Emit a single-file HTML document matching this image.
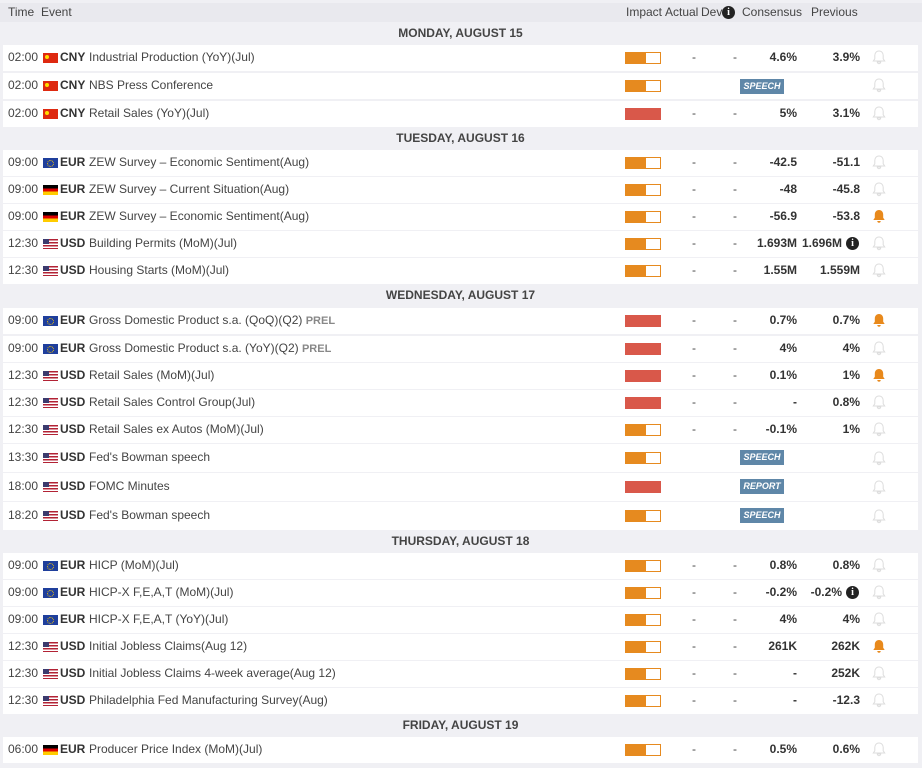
<!DOCTYPE html>
<html><head><meta charset="utf-8"><style>
body{margin:0;width:922px;height:768px;background:#f0f0f4;font-family:"Liberation Sans",Arial,sans-serif;font-size:12px;color:#444;position:relative;overflow:hidden}
.hd{position:absolute;left:0;top:3px;width:922px;height:19px;background:#e9e9ee;line-height:19px;font-size:12px;color:#444}
.hd span{position:absolute}
.dy{position:absolute;left:3px;width:915px;height:22px;line-height:22px;text-align:center;font-weight:bold;font-size:12px;color:#444}
.r{position:absolute;left:3px;width:915px;height:26px;background:#fff;line-height:25px}
.r>*{position:absolute}
.t{left:5px}
.f{left:40px;top:8px;width:15px;height:10px}
.cn{background:#de2910}
.cn:after{content:"";position:absolute;left:2px;top:2px;width:4px;height:4px;background:#ffde00;border-radius:50%}
.eu{background:#1f3f9c}
.eu:after{content:"";position:absolute;left:4px;top:2px;width:5px;height:5px;border:1px dotted #fc0;border-radius:50%}
.de{background:linear-gradient(#000 0 33%,#d00 33% 66%,#fc0 66%)}
.us{background:repeating-linear-gradient(#b22234 0 1.5px,#fff 1.5px 3px)}
.us:after{content:"";position:absolute;left:0;top:0;width:6px;height:5px;background:#3c3b6e}
.c{left:57px;font-weight:bold;color:#333}
.e{left:86px;color:#444}
.pr{color:#888;font-weight:bold;font-size:11px}
.im{left:622px;top:7px;width:34px;height:10px;border:1px solid #e68a1f;background:linear-gradient(90deg,#e68a1f 0 20px,#fff 20px)}
.im.h{background:#d9584a;border-color:#d9584a}
.a{left:689px}.d{left:730px}
.cs{right:121px;font-weight:bold;color:#333}
.p{right:58px;font-weight:bold;color:#333}
.p.i{right:76px}
.info{left:843px;top:6px;width:13px;height:13px;border-radius:50%;background:#222;color:#fff;font-size:10px;line-height:13px;text-align:center;font-weight:bold;font-family:"Liberation Serif",serif}
.bl{left:868px;top:4px}
.bg{left:737px;top:6px;width:44px;height:15px;background:#5f87a8;color:#fff;font-size:9px;font-weight:bold;font-style:italic;line-height:15px;text-align:center}
</style></head><body>
<div class="hd"><span style="left:8px">Time</span><span style="left:41px">Event</span><span style="left:626px">Impact</span><span style="left:665px">Actual</span><span style="left:701px">Dev</span><span style="left:722px;top:3px;width:13px;height:13px;border-radius:50%;background:#222;color:#fff;font-size:10px;line-height:13px;text-align:center;font-weight:bold;font-family:'Liberation Serif',serif">i</span><span style="left:742px">Consensus</span><span style="left:811px">Previous</span></div>

<svg width="0" height="0" style="position:absolute"><defs><symbol id="b" viewBox="0 0 16 16"><path d="M8 2c-2.6 0-4.2 2-4.2 4.6v3.2L2.3 12h11.4l-1.5-2.2V6.6C12.2 4 10.6 2 8 2zM6.3 13a1.7 1.7 0 0 0 3.4 0z"/></symbol></defs></svg>

<div class="dy" style="top:22px">MONDAY, AUGUST 15</div>
<div class="r" style="top:45px"><span class="t">02:00</span><i class="f cn"></i><b class="c">CNY</b><span class="e">Industrial Production (YoY)(Jul)</span><i class="im"></i><span class="a">-</span><span class="d">-</span><span class="cs">4.6%</span><span class="p">3.9%</span><svg class="bl" width="16" height="16" fill="none" stroke="#ddd"><use href="#b"/></svg></div>
<div class="r" style="top:73px"><span class="t">02:00</span><i class="f cn"></i><b class="c">CNY</b><span class="e">NBS Press Conference</span><i class="im"></i><span class="bg">SPEECH</span><svg class="bl" width="16" height="16" fill="none" stroke="#ddd"><use href="#b"/></svg></div>
<div class="r" style="top:101px"><span class="t">02:00</span><i class="f cn"></i><b class="c">CNY</b><span class="e">Retail Sales (YoY)(Jul)</span><i class="im h"></i><span class="a">-</span><span class="d">-</span><span class="cs">5%</span><span class="p">3.1%</span><svg class="bl" width="16" height="16" fill="none" stroke="#ddd"><use href="#b"/></svg></div>

<div class="dy" style="top:127px">TUESDAY, AUGUST 16</div>
<div class="r" style="top:150px"><span class="t">09:00</span><i class="f eu"></i><b class="c">EUR</b><span class="e">ZEW Survey – Economic Sentiment(Aug)</span><i class="im"></i><span class="a">-</span><span class="d">-</span><span class="cs">-42.5</span><span class="p">-51.1</span><svg class="bl" width="16" height="16" fill="none" stroke="#ddd"><use href="#b"/></svg></div>
<div class="r" style="top:177px"><span class="t">09:00</span><i class="f de"></i><b class="c">EUR</b><span class="e">ZEW Survey – Current Situation(Aug)</span><i class="im"></i><span class="a">-</span><span class="d">-</span><span class="cs">-48</span><span class="p">-45.8</span><svg class="bl" width="16" height="16" fill="none" stroke="#ddd"><use href="#b"/></svg></div>
<div class="r" style="top:204px"><span class="t">09:00</span><i class="f de"></i><b class="c">EUR</b><span class="e">ZEW Survey – Economic Sentiment(Aug)</span><i class="im"></i><span class="a">-</span><span class="d">-</span><span class="cs">-56.9</span><span class="p">-53.8</span><svg class="bl" width="16" height="16" fill="#e8891c"><use href="#b"/></svg></div>
<div class="r" style="top:231px"><span class="t">12:30</span><i class="f us"></i><b class="c">USD</b><span class="e">Building Permits (MoM)(Jul)</span><i class="im"></i><span class="a">-</span><span class="d">-</span><span class="cs">1.693M</span><span class="p i">1.696M</span><span class="info">i</span><svg class="bl" width="16" height="16" fill="none" stroke="#ddd"><use href="#b"/></svg></div>
<div class="r" style="top:258px"><span class="t">12:30</span><i class="f us"></i><b class="c">USD</b><span class="e">Housing Starts (MoM)(Jul)</span><i class="im"></i><span class="a">-</span><span class="d">-</span><span class="cs">1.55M</span><span class="p">1.559M</span><svg class="bl" width="16" height="16" fill="none" stroke="#ddd"><use href="#b"/></svg></div>

<div class="dy" style="top:284px">WEDNESDAY, AUGUST 17</div>
<div class="r" style="top:308px"><span class="t">09:00</span><i class="f eu"></i><b class="c">EUR</b><span class="e">Gross Domestic Product s.a. (QoQ)(Q2) <b class="pr">PREL</b></span><i class="im h"></i><span class="a">-</span><span class="d">-</span><span class="cs">0.7%</span><span class="p">0.7%</span><svg class="bl" width="16" height="16" fill="#e8891c"><use href="#b"/></svg></div>
<div class="r" style="top:336px"><span class="t">09:00</span><i class="f eu"></i><b class="c">EUR</b><span class="e">Gross Domestic Product s.a. (YoY)(Q2) <b class="pr">PREL</b></span><i class="im h"></i><span class="a">-</span><span class="d">-</span><span class="cs">4%</span><span class="p">4%</span><svg class="bl" width="16" height="16" fill="none" stroke="#ddd"><use href="#b"/></svg></div>
<div class="r" style="top:363px"><span class="t">12:30</span><i class="f us"></i><b class="c">USD</b><span class="e">Retail Sales (MoM)(Jul)</span><i class="im h"></i><span class="a">-</span><span class="d">-</span><span class="cs">0.1%</span><span class="p">1%</span><svg class="bl" width="16" height="16" fill="#e8891c"><use href="#b"/></svg></div>
<div class="r" style="top:390px"><span class="t">12:30</span><i class="f us"></i><b class="c">USD</b><span class="e">Retail Sales Control Group(Jul)</span><i class="im h"></i><span class="a">-</span><span class="d">-</span><span class="cs">-</span><span class="p">0.8%</span><svg class="bl" width="16" height="16" fill="none" stroke="#ddd"><use href="#b"/></svg></div>
<div class="r" style="top:417px"><span class="t">12:30</span><i class="f us"></i><b class="c">USD</b><span class="e">Retail Sales ex Autos (MoM)(Jul)</span><i class="im"></i><span class="a">-</span><span class="d">-</span><span class="cs">-0.1%</span><span class="p">1%</span><svg class="bl" width="16" height="16" fill="none" stroke="#ddd"><use href="#b"/></svg></div>
<div class="r" style="top:444px;height:28px;line-height:27px"><span class="t">13:30</span><i class="f us" style="top:9px"></i><b class="c">USD</b><span class="e">Fed's Bowman speech</span><i class="im" style="top:8px"></i><span class="bg" style="top:6px">SPEECH</span><svg class="bl" style="top:6px" width="16" height="16" fill="none" stroke="#ddd"><use href="#b"/></svg></div>
<div class="r" style="top:473px;height:28px;line-height:27px"><span class="t">18:00</span><i class="f us" style="top:9px"></i><b class="c">USD</b><span class="e">FOMC Minutes</span><i class="im h" style="top:8px"></i><span class="bg" style="top:6px">REPORT</span><svg class="bl" style="top:6px" width="16" height="16" fill="none" stroke="#ddd"><use href="#b"/></svg></div>
<div class="r" style="top:502px;height:28px;line-height:27px"><span class="t">18:20</span><i class="f us" style="top:9px"></i><b class="c">USD</b><span class="e">Fed's Bowman speech</span><i class="im" style="top:8px"></i><span class="bg" style="top:6px">SPEECH</span><svg class="bl" style="top:6px" width="16" height="16" fill="none" stroke="#ddd"><use href="#b"/></svg></div>

<div class="dy" style="top:530px">THURSDAY, AUGUST 18</div>
<div class="r" style="top:553px"><span class="t">09:00</span><i class="f eu"></i><b class="c">EUR</b><span class="e">HICP (MoM)(Jul)</span><i class="im"></i><span class="a">-</span><span class="d">-</span><span class="cs">0.8%</span><span class="p">0.8%</span><svg class="bl" width="16" height="16" fill="none" stroke="#ddd"><use href="#b"/></svg></div>
<div class="r" style="top:580px"><span class="t">09:00</span><i class="f eu"></i><b class="c">EUR</b><span class="e">HICP-X F,E,A,T (MoM)(Jul)</span><i class="im"></i><span class="a">-</span><span class="d">-</span><span class="cs">-0.2%</span><span class="p i">-0.2%</span><span class="info">i</span><svg class="bl" width="16" height="16" fill="none" stroke="#ddd"><use href="#b"/></svg></div>
<div class="r" style="top:607px"><span class="t">09:00</span><i class="f eu"></i><b class="c">EUR</b><span class="e">HICP-X F,E,A,T (YoY)(Jul)</span><i class="im"></i><span class="a">-</span><span class="d">-</span><span class="cs">4%</span><span class="p">4%</span><svg class="bl" width="16" height="16" fill="none" stroke="#ddd"><use href="#b"/></svg></div>
<div class="r" style="top:634px"><span class="t">12:30</span><i class="f us"></i><b class="c">USD</b><span class="e">Initial Jobless Claims(Aug 12)</span><i class="im"></i><span class="a">-</span><span class="d">-</span><span class="cs">261K</span><span class="p">262K</span><svg class="bl" width="16" height="16" fill="#e8891c"><use href="#b"/></svg></div>
<div class="r" style="top:661px"><span class="t">12:30</span><i class="f us"></i><b class="c">USD</b><span class="e">Initial Jobless Claims 4-week average(Aug 12)</span><i class="im"></i><span class="a">-</span><span class="d">-</span><span class="cs">-</span><span class="p">252K</span><svg class="bl" width="16" height="16" fill="none" stroke="#ddd"><use href="#b"/></svg></div>
<div class="r" style="top:688px"><span class="t">12:30</span><i class="f us"></i><b class="c">USD</b><span class="e">Philadelphia Fed Manufacturing Survey(Aug)</span><i class="im"></i><span class="a">-</span><span class="d">-</span><span class="cs">-</span><span class="p">-12.3</span><svg class="bl" width="16" height="16" fill="none" stroke="#ddd"><use href="#b"/></svg></div>

<div class="dy" style="top:714px">FRIDAY, AUGUST 19</div>
<div class="r" style="top:737px"><span class="t">06:00</span><i class="f de"></i><b class="c">EUR</b><span class="e">Producer Price Index (MoM)(Jul)</span><i class="im"></i><span class="a">-</span><span class="d">-</span><span class="cs">0.5%</span><span class="p">0.6%</span><svg class="bl" width="16" height="16" fill="none" stroke="#ddd"><use href="#b"/></svg></div>
</body></html>
